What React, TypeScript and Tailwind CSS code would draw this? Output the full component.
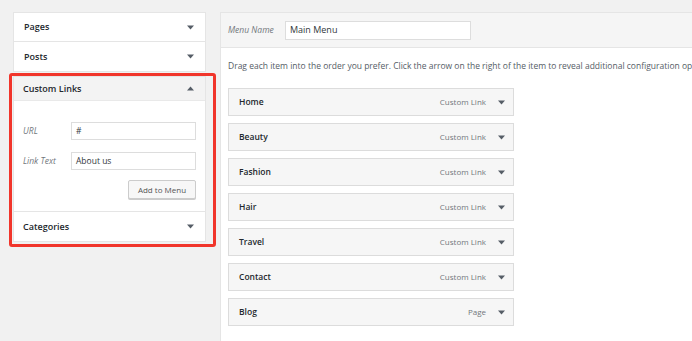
import React from "react";

const Down = () => (
  <svg width="7" height="5" viewBox="0 0 7 5" className="shrink-0">
    <path d="M0 0.5 L7 0.5 L3.5 4.5 Z" fill="#555d66" />
  </svg>
);
const Up = () => (
  <svg width="7" height="5" viewBox="0 0 7 5" className="shrink-0">
    <path d="M0 4.5 L7 4.5 L3.5 0.5 Z" fill="#555d66" />
  </svg>
);

const items: [string, string][] = [
  ["Home", "Custom Link"],
  ["Beauty", "Custom Link"],
  ["Fashion", "Custom Link"],
  ["Hair", "Custom Link"],
  ["Travel", "Custom Link"],
  ["Contact", "Custom Link"],
  ["Blog", "Page"],
];

export default function App() {
  return (
    <div
      className="relative w-[692px] h-[341px] overflow-hidden bg-[#f1f1f1] flex pt-[12px] text-[#23282d]"
      style={{ fontFamily: '"Open Sans", "Noto Sans", sans-serif' }}
    >
      {/* Left column */}
      <div className="ml-[13px] w-[193px] shrink-0 flex flex-col">
        <div className="h-[30px] bg-white border border-[#e5e5e5] flex items-center justify-between pl-[10px] pr-[11px]">
          <span className="text-[9px] font-semibold">Pages</span>
          <Down />
        </div>
        <div className="h-[30px] bg-white border border-t-0 border-[#e5e5e5] flex items-center justify-between pl-[10px] pr-[11px]">
          <span className="text-[9px] font-semibold">Posts</span>
          <Down />
        </div>
        <div className="mt-[4px] bg-white border border-[#e5e5e5] flex flex-col">
          <div className="h-[24px] bg-[#f3f3f3] border-b border-[#e9e9e9] flex items-center justify-between pl-[9px] pr-[11px]">
            <span className="text-[9px] font-semibold">Custom Links</span>
            <Up />
          </div>
          <div className="pt-[21px] pb-[12px] pl-[9px] pr-[9px] flex flex-col">
            <div className="flex items-center">
              <span className="w-[48px] text-[8.5px] italic text-[#72777c]">URL</span>
              <div className="flex-1 h-[18px] border border-[#dddddd] bg-white flex items-center px-[4px] text-[8.5px] text-[#32373c]">
                #
              </div>
            </div>
            <div className="flex items-center mt-[12px]">
              <span className="w-[48px] text-[8.5px] italic text-[#72777c]">Link Text</span>
              <div className="flex-1 h-[18px] border border-[#dddddd] bg-white flex items-center px-[4px] text-[8.5px] text-[#32373c]">
                About us
              </div>
            </div>
            <div className="flex justify-end mt-[10px]">
              <div className="w-[68px] h-[19px] border border-[#cccccc] bg-[#f7f7f7] rounded-[2px] flex items-center justify-center text-[8px] text-[#555555] shadow-[0_1px_0_#ccc]">
                Add to Menu
              </div>
            </div>
          </div>
          <div className="h-[30px] border-t border-[#e5e5e5] flex items-center justify-between pl-[9px] pr-[11px]">
            <span className="text-[9px] font-semibold">Categories</span>
            <Down />
          </div>
        </div>
      </div>

      {/* Red highlight overlay */}
      <div className="absolute left-[9px] top-[73px] w-[207px] h-[174px] border-[3px] border-[#f1352b] rounded-[3px] pointer-events-none" />

      {/* Right panel */}
      <div className="ml-[14px] -mr-[10px] flex-1 flex flex-col bg-white border-l border-t border-[#e5e5e5]">
        <div className="h-[35px] bg-[#f5f5f5] border-b border-[#e5e5e5] flex items-center pl-[7px]">
          <span className="w-[57px] text-[8.5px] italic text-[#72777c]">Menu Name</span>
          <div className="w-[186px] h-[19px] bg-white border border-[#dddddd] flex items-center px-[4px] text-[9px] text-[#32373c]">
            Main Menu
          </div>
        </div>
        <div className="pl-[7px] pt-[12px] flex flex-col">
          <div className="text-[8.5px] text-[#555d66] whitespace-nowrap leading-[12px]">
            Drag each item into the order you prefer. Click the arrow on the right of the item to reveal additional configuration options.
          </div>
          <div className="mt-[16px] w-[286px] flex flex-col gap-[7px]">
            {items.map(([name, type]) => (
              <div
                key={name}
                className="h-[28px] bg-[#f6f6f6] border border-[#dcdcdc] flex items-center pl-[10px] pr-[8px]"
              >
                <span className="flex-1 text-[8.5px] font-semibold">{name}</span>
                <span className="text-[8px] text-[#72777c] mr-[12px]">{type}</span>
                <Down />
              </div>
            ))}
          </div>
        </div>
      </div>
    </div>
  );
}
